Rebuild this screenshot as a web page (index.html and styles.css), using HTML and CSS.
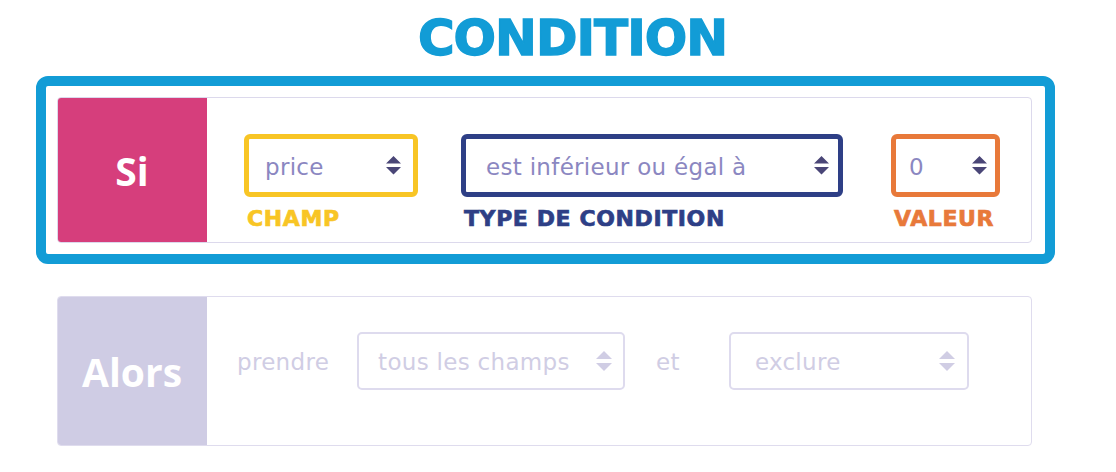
FILE: index.html
```html
<!DOCTYPE html>
<html lang="fr">

<head>
    <meta charset="UTF-8">
    <meta name="viewport" content="width=device-width, initial-scale=1.0">
    <title>Condition</title>
    <link rel="stylesheet" href="styles.css">
</head>

<body>

    <div class="page">
        <h1 class="title">CONDITION</h1>

        <div class="frame">
            <div class="rule">
                <div class="side side-if">Si</div>
                <div class="fields">
                    <div class="field">
                        <div class="select select-champ">
                            <span class="value">price</span>
                            <svg class="arrows" width="15" height="19" viewBox="0 0 15 19"><path d="M0 7.5 L7.5 0 L15 7.5 Z M0 11 L15 11 L7.5 18.5 Z" /></svg>
                        </div>
                        <span class="label label-champ">CHAMP</span>
                    </div>
                    <div class="field">
                        <div class="select select-type">
                            <span class="value">est inférieur ou égal à</span>
                            <svg class="arrows" width="15" height="19" viewBox="0 0 15 19"><path d="M0 7.5 L7.5 0 L15 7.5 Z M0 11 L15 11 L7.5 18.5 Z" /></svg>
                        </div>
                        <span class="label label-type">TYPE DE CONDITION</span>
                    </div>
                    <div class="field field-end">
                        <div class="select select-valeur">
                            <span class="value">0</span>
                            <svg class="arrows" width="15" height="19" viewBox="0 0 15 19"><path d="M0 7.5 L7.5 0 L15 7.5 Z M0 11 L15 11 L7.5 18.5 Z" /></svg>
                        </div>
                        <span class="label label-valeur">VALEUR</span>
                    </div>
                </div>
            </div>
        </div>

        <div class="rule rule-then">
            <div class="side side-then">Alors</div>
            <div class="fields fields-then">
                <span class="word">prendre</span>
                <div class="select select-muted select-champs">
                    <span class="value">tous les champs</span>
                    <svg class="arrows" width="16" height="20" viewBox="0 0 16 20"><path d="M0 8 L8 0 L16 8 Z M0 12 L16 12 L8 20 Z" /></svg>
                </div>
                <span class="word word-et">et</span>
                <div class="select select-muted select-exclure">
                    <span class="value">exclure</span>
                    <svg class="arrows" width="16" height="20" viewBox="0 0 16 20"><path d="M0 8 L8 0 L16 8 Z M0 12 L16 12 L8 20 Z" /></svg>
                </div>
            </div>
        </div>
    </div>

</body>

</html>
```

FILE: styles.css
```css
* {
    box-sizing: border-box;
    margin: 0;
    padding: 0;
}

body {
    background-color: #ffffff;
    font-family: "DejaVu Sans", sans-serif;
    width: 1116px;
    height: 472px;
    overflow: hidden;
}

.page {
    padding: 0 0 0 36px;
    width: 1100px;
}

.title {
    font-family: "DejaVu Sans", sans-serif;
    font-weight: 700;
    font-size: 50px;
    line-height: 60px;
    letter-spacing: -1px;
    color: #129cd6;
    -webkit-text-stroke: 1.4px #129cd6;
    text-align: center;
    width: 1019px;
    height: 76px;
    padding: 8px 0 0 54px;
}

.frame {
    width: 1019px;
    border: 10px solid #129cd6;
    border-radius: 12px;
    padding: 11px 13px 11px 11px;
}

.rule {
    display: flex;
    width: 975px;
    height: 146px;
    border: 1px solid #dcd9ec;
    border-radius: 4px;
    overflow: hidden;
}

.side {
    width: 150px;
    flex-shrink: 0;
    display: flex;
    align-items: center;
    justify-content: center;
    color: #ffffff;
    font-family: "Open Sans", sans-serif;
    font-weight: 700;
    font-size: 39px;
    margin: -1px 0 -1px -1px;
}

.side-if {
    background-color: #d63e7c;
}

.side-then {
    background-color: #cfcce4;
}

.fields {
    display: flex;
    align-items: flex-start;
    padding: 36px 0 0 37px;
}

.field {
    display: flex;
    flex-direction: column;
    margin-right: 43px;
}

.field-end {
    margin-left: 5px;
    margin-right: 0;
}

.select {
    display: flex;
    align-items: center;
    justify-content: space-between;
    height: 63px;
    border: 5px solid #f8c525;
    border-radius: 6px;
    padding: 0 12px 0 16px;
    font-size: 23px;
    letter-spacing: 0.3px;
    color: #8b87c1;
}

.select .value {
    padding-top: 3px;
}

.select .arrows {
    fill: #4a4677;
    flex-shrink: 0;
}

.select-champ {
    width: 174px;
    border-color: #f8c525;
}

.select-type {
    width: 382px;
    border-color: #2e3f86;
    padding-left: 20px;
    padding-right: 9px;
}

.select-valeur {
    width: 109px;
    border-color: #e8793a;
    padding-left: 13px;
    padding-right: 8px;
}

.label {
    font-weight: 700;
    font-size: 22px;
    line-height: 24px;
    margin-top: 10px;
    padding-left: 3px;
    letter-spacing: 0.6px;
    -webkit-text-stroke: 0.7px currentColor;
}

.label-champ {
    color: #f8c525;
}

.label-type {
    color: #2e3f86;
}

.label-valeur {
    color: #e8793a;
}

.rule-then {
    margin-top: 32px;
    width: 975px;
    margin-left: 21px;
    height: 150px;
    border-color: #dfdcee;
}

.fields-then {
    align-items: center;
    padding: 35px 0 0 30px;
    height: 92px;
}

.word {
    font-size: 23px;
    letter-spacing: 0.3px;
    color: #d0cde4;
    margin-right: 28px;
    padding-top: 3px;
}

.word-et {
    margin: 0 49px 0 31px;
}

.select-muted {
    height: 58px;
    border: 2px solid #dedbee;
    border-radius: 5px;
    color: #d0cde4;
    padding: 0 11px 0 19px;
}

.select-muted .arrows {
    fill: #d0cde4;
}

.select-champs {
    width: 268px;
}

.select-exclure {
    width: 240px;
    padding-left: 24px;
    padding-right: 12px;
}
```
